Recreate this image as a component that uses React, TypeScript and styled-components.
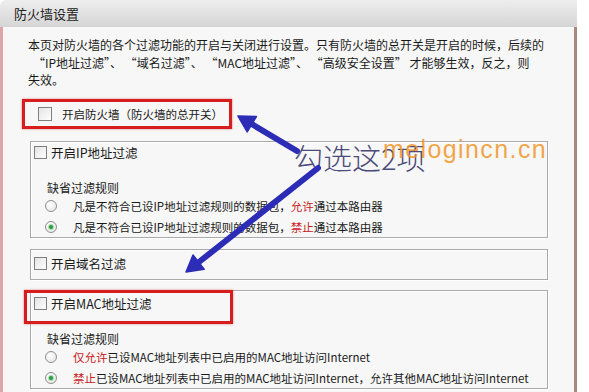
import styled, { createGlobalStyle } from "styled-components";

const GlobalStyle = createGlobalStyle`
    html, body {
        margin: 0;
        padding: 0;
        background: #ffffff;
    }
    body {
        font-family: "Noto Sans CJK SC", "Liberation Sans", sans-serif;
        font-size: 12px;
        color: #1a1a1a;
    }
`;

const Frame = styled.div`
    position: relative;
    width: 577px;
    height: 392px;
`;

const Header = styled.div`
    height: 27px;
    display: flex;
    align-items: center;
    padding-left: 14px;
    font-size: 13px;
    color: #222;
    background: linear-gradient(#eeeeee, #d5d5d5);
    border-top-left-radius: 6px;
`;

const Body = styled.div`
    height: 356px;
    padding-top: 9px;
    background: #f7f7f7;
    border-left: 3px solid #dca6a6;
    border-right: 3px solid #a98a7c;
`;

const Intro = styled.div`
    padding-left: 25px;
    line-height: 17.5px;
    white-space: nowrap;
`;

const Indent = styled.span`
    padding-left: 5px;
`;

const Highlight = styled.div`
    box-sizing: border-box;
    width: 210px;
    height: 30px;
    margin: 10px 0 0 19px;
    padding-left: 13px;
    display: flex;
    align-items: center;
    gap: 10px;
    border: 3px solid #d61e1e;
    box-shadow: 0 0 2px rgba(210, 40, 40, 0.6);
    font-size: 11.5px;
    white-space: nowrap;
`;

const Group = styled.div<{ $top: number }>`
    position: relative;
    box-sizing: border-box;
    width: 518px;
    margin: ${p => p.$top}px 0 0 27px;
    padding: 0 0 1px 3px;
    border: 1px solid #aaaaaa;
    box-shadow: inset 1px 1px 0 #ffffff, 1px 1px 0 #ffffff;
`;

const SwitchRow = styled.label<{ $pad: number }>`
    display: flex;
    align-items: center;
    gap: 4px;
    height: 16px;
    padding-top: ${p => p.$pad}px;
    padding-bottom: ${p => p.$pad === 6 ? 6 : 0}px;
    font-size: 12.5px;
`;

const Box = styled.span<{ $size?: number }>`
    box-sizing: border-box;
    width: ${p => p.$size ?? 13}px;
    height: ${p => p.$size ?? 13}px;
    border: 1px solid #7f7f7f;
    background: linear-gradient(135deg, #e4e4e4, #ffffff);
    flex: none;
`;

const RuleTitle = styled.div`
    margin-top: 18px;
    padding-left: 13px;
    height: 18px;
    line-height: 18px;
`;

const RadioRow = styled.div<{ $gap?: number }>`
    display: flex;
    align-items: center;
    height: 18px;
    margin-top: ${p => p.$gap ?? 0}px;
    padding-left: 11px;
    font-size: 11.5px;
    white-space: nowrap;
`;

const Radio = styled.span<{ $on?: boolean }>`
    position: relative;
    box-sizing: border-box;
    width: 12px;
    height: 12px;
    margin-right: 16px;
    border-radius: 50%;
    border: 1px solid #8e8e8e;
    background: radial-gradient(circle at 35% 35%, #ffffff, #e2e2e2);
    flex: none;
    &::after {
        content: "";
        display: ${p => p.$on ? "block" : "none"};
        position: absolute;
        left: 3px;
        top: 3px;
        width: 4px;
        height: 4px;
        border-radius: 50%;
        background: #2f9a3c;
        box-shadow: 0 0 0 1px #a8dcae;
    }
`;

const Red = styled.span`
    color: #c8201c;
`;

const MarkBox = styled.div`
    position: absolute;
    left: -7px;
    top: -1px;
    width: 209px;
    height: 34px;
    box-sizing: border-box;
    border: 3px solid #d61e1e;
    box-shadow: 0 0 2px rgba(210, 40, 40, 0.6);
    pointer-events: none;
`;

const Arrows = styled.svg`
    position: absolute;
    left: 0;
    top: 0;
    pointer-events: none;
`;

const Note = styled.span`
    position: absolute;
    left: 294px;
    top: 143px;
    font-size: 29px;
    line-height: 1;
    font-weight: 300;
    color: #4c4c7a;
    white-space: nowrap;
`;

const Watermark = styled.span`
    position: absolute;
    left: 383px;
    top: 137px;
    font-family: "Liberation Sans", sans-serif;
    font-size: 25px;
    letter-spacing: 1.4px;
    line-height: 1;
    color: rgba(240, 150, 40, 0.85);
    white-space: nowrap;
`;

export default function App() {
    return <>
        <GlobalStyle />
        <Frame>
            <Header>防火墙设置</Header>
            <Body>
                <Intro>
                    本页对防火墙的各个过滤功能的开启与关闭进行设置。只有防火墙的总开关是开启的时候，后续的<br />
                    <Indent>“IP地址过滤”、 “域名过滤”、 “MAC地址过滤”、 “高级安全设置” 才能够生效，反之，则</Indent><br />
                    失效。
                </Intro>
                <Highlight>
                    <Box $size={14} />
                    <span>开启防火墙（防火墙的总开关）</span>
                </Highlight>
                <Group $top={12}>
                    <SwitchRow $pad={3}><Box />开启IP地址过滤</SwitchRow>
                    <RuleTitle>缺省过滤规则</RuleTitle>
                    <RadioRow><Radio />凡是不符合已设IP地址过滤规则的数据包，<Red>允许</Red>通过本路由器</RadioRow>
                    <RadioRow $gap={3}><Radio $on />凡是不符合已设IP地址过滤规则的数据包，<Red>禁止</Red>通过本路由器</RadioRow>
                </Group>
                <Group $top={11}>
                    <SwitchRow $pad={6}><Box />开启域名过滤</SwitchRow>
                </Group>
                <Group $top={10}>
                    <SwitchRow $pad={5}><Box />开启MAC地址过滤</SwitchRow>
                    <RuleTitle>缺省过滤规则</RuleTitle>
                    <RadioRow><Radio /><Red>仅允许</Red>已设MAC地址列表中已启用的MAC地址访问Internet</RadioRow>
                    <RadioRow $gap={3}><Radio $on /><Red>禁止</Red>已设MAC地址列表中已启用的MAC地址访问Internet，允许其他MAC地址访问Internet</RadioRow>
                    <MarkBox />
                </Group>
            </Body>
            <Note>勾选这2项</Note>
            <Watermark>melogincn.cn</Watermark>
            <Arrows width="589" height="392" viewBox="0 0 589 392">
                <g stroke="#2c2cb6" strokeWidth="6" strokeLinecap="round" fill="#2c2cb6">
                    <line x1="297" y1="151" x2="250" y2="123" />
                    <line x1="318" y1="168" x2="199" y2="262" />
                </g>
                <g fill="#2c2cb6" stroke="#2c2cb6" strokeWidth="1.5" strokeLinejoin="round">
                    <polygon points="238,116 256.4,116.5 247.2,131.9" />
                    <polygon points="186,272 204.2,269.2 193,255" />
                </g>
            </Arrows>
        </Frame>
    </>;
}
